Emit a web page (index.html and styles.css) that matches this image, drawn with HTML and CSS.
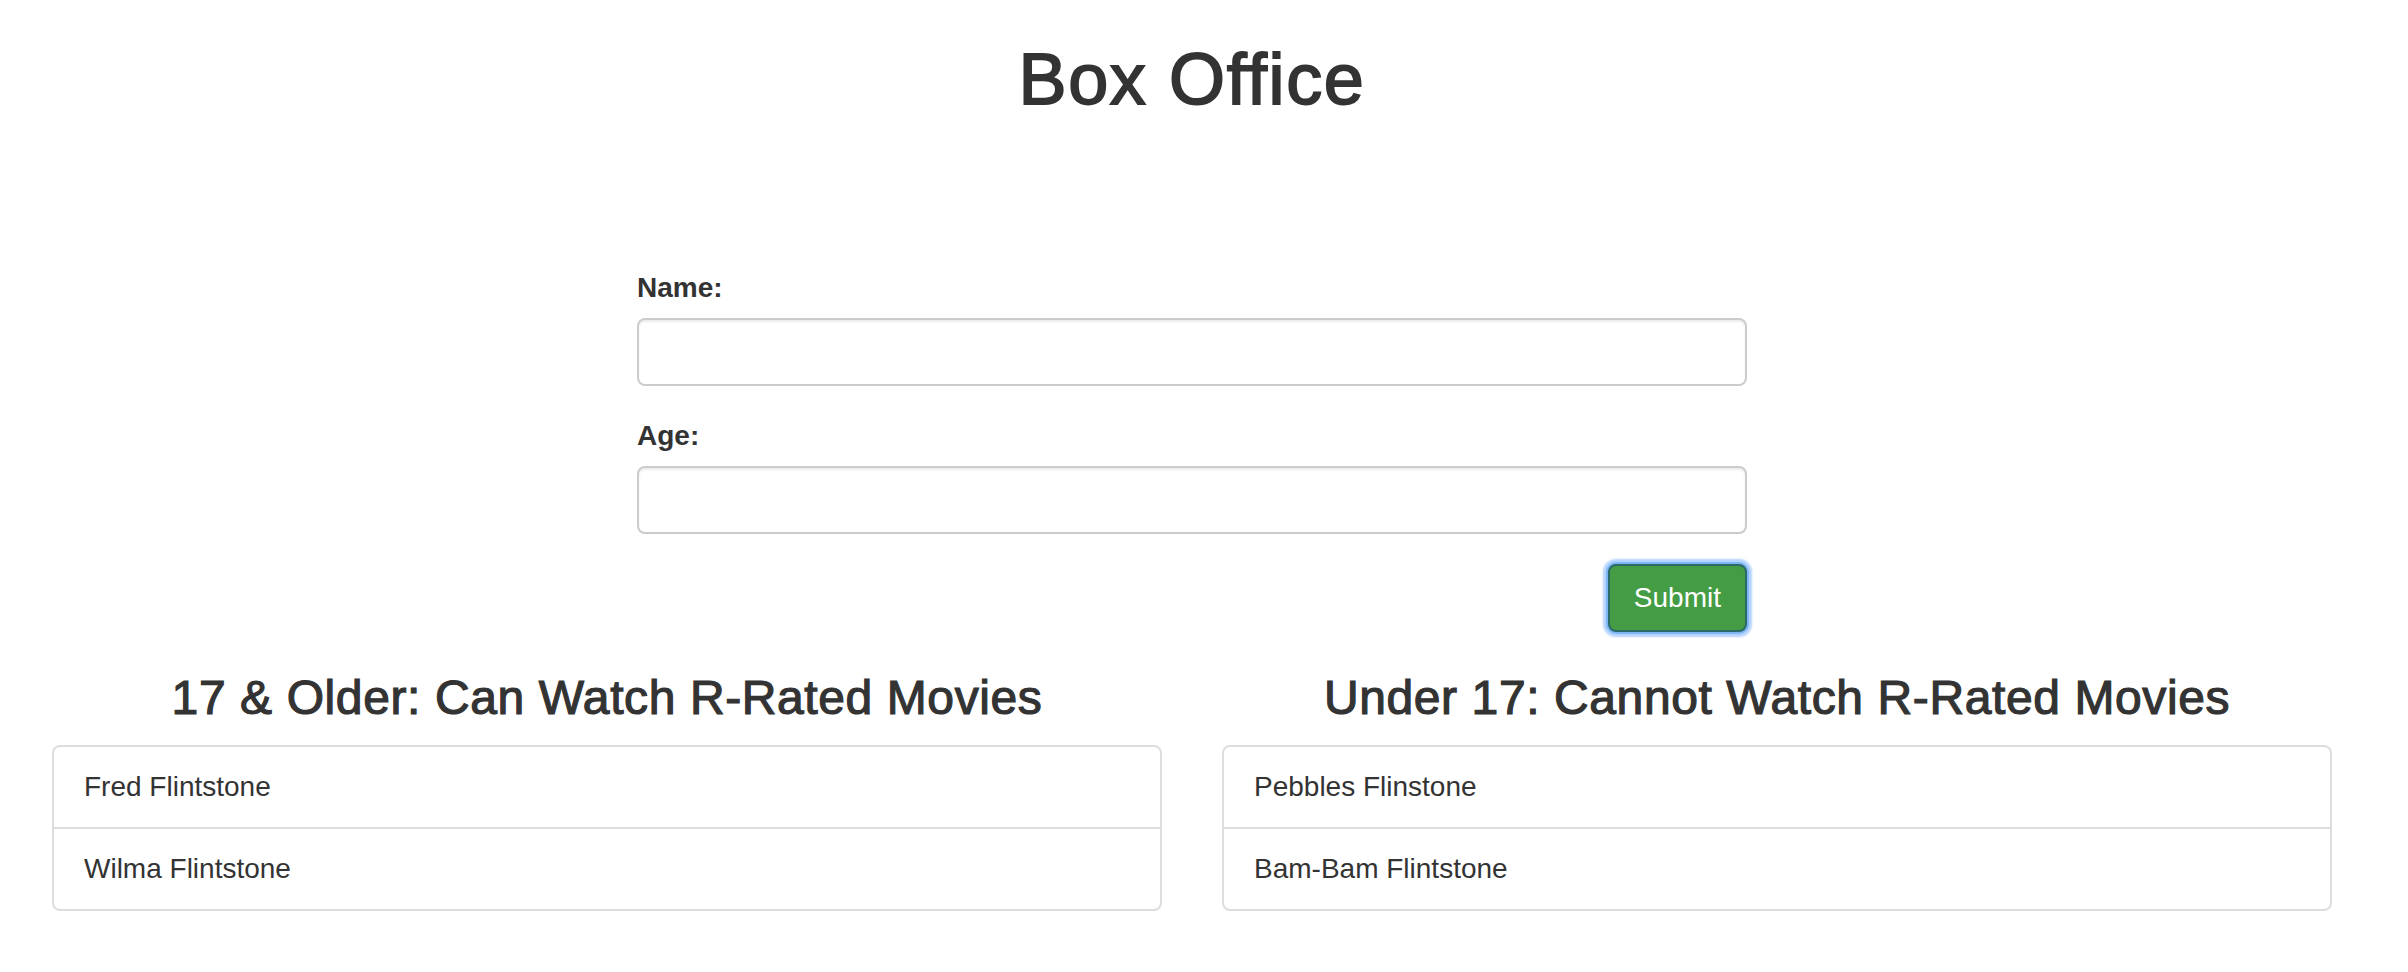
FILE: index.html
```html
<!DOCTYPE html>
<html>
<head>
<meta charset="utf-8">
<title>Box Office</title>
<link rel="stylesheet" href="styles.css">
</head>
<body>
<div class="page">
  <div class="container">
    <h1 class="title">Box Office</h1>
    <div class="form-row">
      <form class="form">
        <div class="form-group">
          <label class="label" for="name">Name:</label>
          <input class="input" id="name" type="text">
        </div>
        <div class="form-group">
          <label class="label" for="age">Age:</label>
          <input class="input" id="age" type="text">
        </div>
        <div class="actions">
          <button type="button" class="btn">Submit</button>
        </div>
      </form>
    </div>
    <div class="lists">
      <div class="col">
        <h3 class="col-title">17 &amp; Older: Can Watch R-Rated Movies</h3>
        <ul class="list-group">
          <li class="list-item">Fred Flintstone</li>
          <li class="list-item">Wilma Flintstone</li>
        </ul>
      </div>
      <div class="col">
        <h3 class="col-title">Under 17: Cannot Watch R-Rated Movies</h3>
        <ul class="list-group">
          <li class="list-item">Pebbles Flinstone</li>
          <li class="list-item">Bam-Bam Flintstone</li>
        </ul>
      </div>
    </div>
  </div>
</div>
</body>
</html>
```

FILE: styles.css
```css
* { box-sizing: border-box; }
html, body { margin: 0; padding: 0; background: #fff; }
body {
  font-family: "Liberation Sans", Arial, sans-serif;
  font-size: 28px;
  line-height: 40px;
  color: #333;
}
.page { width: 2384px; }
.container {
  width: 2340px;
  margin: 0 auto;
  padding: 0 30px;
}
.title {
  margin: 40px 0 20px;
  font-size: 72px;
  line-height: 79.2px;
  font-weight: normal;
  letter-spacing: 1.6px;
  -webkit-text-stroke: 1.8px #333;
  text-align: center;
}
.form-row {
  display: flex;
  justify-content: center;
  padding-top: 129px;
}
.form { width: 1110px; }
.form-group { margin-bottom: 30px; }
.label {
  display: inline-block;
  margin-bottom: 10px;
  font-weight: bold;
}
.input {
  display: block;
  width: 100%;
  height: 68px;
  padding: 12px 24px;
  font: inherit;
  color: #555;
  background: #fff;
  border: 2px solid #ccc;
  border-radius: 8px;
  box-shadow: inset 0 2px 2px rgba(0,0,0,.075);
  outline: none;
}
.actions {
  display: flex;
  justify-content: flex-end;
}
.btn {
  height: 68px;
  padding: 12px 24px;
  font: inherit;
  color: #fff;
  background: #449d44;
  border: 2px solid #2c6a6a;
  border-radius: 8px;
  box-shadow: 0 0 0 2px #7fb6f6, 0 0 2px 5px rgba(120,175,250,.55);
  cursor: pointer;
}
.lists {
  display: flex;
  gap: 60px;
}
.col { flex: 1 1 0; min-width: 0; }
.col-title {
  margin: 40px 0 20px;
  font-size: 48px;
  line-height: 52.8px;
  font-weight: normal;
  letter-spacing: 0.6px;
  -webkit-text-stroke: 1.2px #333;
  text-align: center;
}
.list-group {
  list-style: none;
  margin: 0 0 40px;
  padding: 0;
}
.list-item {
  padding: 20px 30px;
  border: 2px solid #ddd;
  margin-bottom: -2px;
  background: #fff;
}
.list-item:first-child { border-radius: 8px 8px 0 0; }
.list-item:last-child { border-radius: 0 0 8px 8px; margin-bottom: 0; }
```
